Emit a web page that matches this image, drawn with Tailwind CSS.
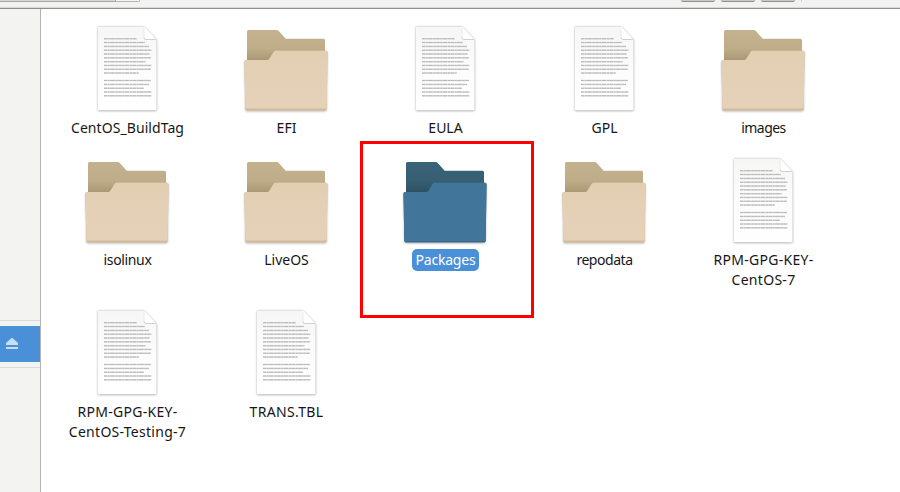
<!DOCTYPE html>
<html lang="en">
<head>
<meta charset="utf-8">
<title>Files</title>
<script src="https://cdn.jsdelivr.net/npm/@tailwindcss/browser@4"></script>
</head>
<body class="w-[900px] h-[492px] overflow-hidden bg-white flex flex-col font-['Noto_Sans','Open_Sans',sans-serif] text-[14px] leading-[20px] text-[#161616]">
<svg class="absolute w-0 h-0">
  <defs>
    <linearGradient id="tanBack" x1="0" y1="0" x2="0" y2="1"><stop offset="0" stop-color="#c4b18d"/><stop offset=".55" stop-color="#bfac88"/><stop offset="1" stop-color="#a3906e"/></linearGradient>
    <linearGradient id="blueBack" x1="0" y1="0" x2="0" y2="1"><stop offset="0" stop-color="#386378"/><stop offset=".55" stop-color="#365f73"/><stop offset="1" stop-color="#2a4c5d"/></linearGradient>
    <linearGradient id="tanFront" x1="0" y1="0" x2="0" y2="1"><stop offset="0" stop-color="#e2cfb3"/><stop offset="1" stop-color="#e4d1b8"/></linearGradient>
    <linearGradient id="pg" x1="0" y1="0" x2="0" y2="1"><stop offset="0" stop-color="#f6f6f5"/><stop offset=".5" stop-color="#fcfcfc"/><stop offset="1" stop-color="#fff"/></linearGradient>
    <filter id="sh" x="-10%" y="-10%" width="120%" height="120%"><feGaussianBlur stdDeviation="1.1"/></filter>
    <path id="frontShape" d="M8 40H29.5Q30.7 40 31.3 39L35.8 31.8Q36.5 30.7 37.8 30.7H88Q89.5 30.7 89.5 32.2L88.7 89Q88.7 90.4 87.3 90.4H8.7Q7.3 90.4 7.3 89L6.5 41.5Q6.5 40 8 40Z"/>
    <path id="backShape" d="M10.5 10H38.6Q39.6 10 40.5 10.8L47.7 18.7H85.5Q87 18.7 87 20.2V44H9V11.5Q9 10 10.5 10Z"/>
    <path id="textLines" d="M25 18.7H58M25 22.5H66M25 26.4H70M25 30.3H72.5M25 34H70.5M25 37.8H72M25 41.7H66.5M25 45.4H72.5M25 49.3H72M25 53.1H60M25 60.5H72M25 64.4H70M25 68.3H65M25 72H72.5M25 75.8H72.5" fill="none"/>
    <symbol id="folder" viewBox="0 0 96 96">
      <use href="#frontShape" y="1" fill="#000" opacity=".28" filter="url(#sh)"/>
      <use href="#backShape" fill="url(#tanBack)"/>
      <use href="#frontShape" fill="#d4bb97"/>
      <path d="M8 40H29.5Q30.7 40 31.3 39L35.8 31.8Q36.5 30.7 37.8 30.7H88Q89.5 30.7 89.5 32.2L88.7 88.5H7.3L6.5 41.5Q6.5 40 8 40Z" fill="url(#tanFront)"/>
    </symbol>
    <symbol id="folderSel" viewBox="0 0 96 96">
      <use href="#frontShape" y="1" fill="#000" opacity=".28" filter="url(#sh)"/>
      <use href="#backShape" fill="url(#blueBack)"/>
      <use href="#frontShape" fill="#3a6888"/>
      <path d="M8 40H29.5Q30.7 40 31.3 39L35.8 31.8Q36.5 30.7 37.8 30.7H88Q89.5 30.7 89.5 32.2L88.7 89H7.3L6.5 41.5Q6.5 40 8 40Z" fill="#42759a"/>
    </symbol>
    <symbol id="doc" viewBox="0 0 96 96">
      <path d="M19 7H65L77.5 20V90.8H19Z" fill="#000" opacity=".42" filter="url(#sh)"/>
      <path d="M19.8 6.8H65.2L77.5 19.8V89.2Q77.5 90.2 76.5 90.2H19.8Q18.8 90.2 18.8 89.2V7.8Q18.8 6.8 19.8 6.8Z" fill="url(#pg)"/>
      <path d="M65.2 6.8L77.5 19.8H67.2Q65.2 19.8 65.2 17.8Z" fill="#fff"/>
      <path d="M65 17.4Q65 19.5 67 19.5H77" fill="none" stroke="#c4c4c4" stroke-width=".8"/>
      <path d="M65 8.5V17.5" fill="none" stroke="#e6e6e6" stroke-width=".8"/>
      <use href="#textLines" stroke="#d6d6d6" stroke-width="1.5"/>
      <use href="#textLines" stroke="#b4b4b4" stroke-width=".9" stroke-dasharray="3 .9 1.6 .8 4.2 1 2.3 .7"/>
    </symbol>
  </defs>
</svg>

<header class="h-[9px] shrink-0 bg-[#f2f2f2] border-b border-[#8e9188] flex items-start justify-between shadow-[inset_0_-1px_0_#d9dad6]">
  <div class="flex">
    <div class="w-[116px] h-[2px] bg-[#d7d7d6] border-b border-r border-[#a9aaa6]"></div>
    <div class="w-[24px] h-[2px] bg-[#f5f5f5] border-b border-r border-[#b5b6b2] rounded-br-[2px]"></div>
  </div>
  <div class="flex gap-[6px] mr-[98px]">
    <div class="w-[34px] h-[2px] bg-[#c9cac5] border-b border-[#8f9289] rounded-b-[2px]"></div>
    <div class="w-[34px] h-[2px] bg-[#c9cac5] border-b border-[#8f9289] rounded-b-[2px]"></div>
    <div class="w-[34px] h-[2px] bg-[#c9cac5] border-b border-[#8f9289] rounded-b-[2px]"></div>
    <div class="w-px h-[2px] bg-[#d2d2d0]"></div>
  </div>
</header>

<div class="flex flex-1">
  <aside class="w-[41px] shrink-0 bg-[#f3f3f1] border-r border-[#b3b3af] pt-[311px]">
    <div class="h-px bg-[#d8d8d6]"></div>
    <div class="mt-[5px] h-[36px] bg-[#4a90d9] pt-[12px] pl-[6px]">
      <svg width="12" height="12" viewBox="0 0 12 12" fill="#c9def4"><path d="M5.5 0H6.5L12 5V7H0V5Z"/><path d="M0 9H12V11H0Z"/></svg>
    </div>
    <div class="mt-[5px] h-px bg-[#d8d8d6]"></div>
  </aside>

  <main class="pl-[7px] pt-[11px] grid grid-cols-[repeat(5,159px)] grid-rows-[132px_152px_152px] text-center">
    <div><svg class="ml-[31px] mb-[2px] block w-[96px] h-[96px]"><use href="#doc"/></svg><span class="tracking-[0.07px]">CentOS_BuildTag</span></div>
    <div><svg class="ml-[31px] mb-[2px] block w-[96px] h-[96px]"><use href="#folder"/></svg><span>EFI</span></div>
    <div><svg class="ml-[31px] mb-[2px] block w-[96px] h-[96px]"><use href="#doc"/></svg><span>EULA</span></div>
    <div><svg class="ml-[31px] mb-[2px] block w-[96px] h-[96px]"><use href="#doc"/></svg><span>GPL</span></div>
    <div><svg class="ml-[31px] mb-[2px] block w-[96px] h-[96px]"><use href="#folder"/></svg><span class="tracking-[-0.55px]">images</span></div>

    <div><svg class="ml-[31px] mb-[2px] block w-[96px] h-[96px]"><use href="#folder"/></svg><span class="tracking-[-0.35px]">isolinux</span></div>
    <div><svg class="ml-[31px] mb-[2px] block w-[96px] h-[96px]"><use href="#folder"/></svg><span>LiveOS</span></div>
    <div><svg class="ml-[31px] mb-[1px] block w-[96px] h-[96px]"><use href="#folderSel"/></svg><span class="block w-[67px] h-[22px] leading-[22px] ml-[46px] rounded-[5px] bg-[#4a90d9] text-white tracking-[-0.2px]">Packages</span></div>
    <div><svg class="ml-[31px] mb-[2px] block w-[96px] h-[96px]"><use href="#folder"/></svg><span class="tracking-[-0.45px]">repodata</span></div>
    <div><svg class="ml-[31px] mb-[2px] block w-[96px] h-[96px]"><use href="#doc"/></svg><span class="tracking-[0.3px]">RPM-GPG-KEY-<br>CentOS-7</span></div>

    <div><svg class="ml-[31px] mb-[2px] block w-[96px] h-[96px]"><use href="#doc"/></svg><span class="tracking-[0.28px]">RPM-GPG-KEY-<br>CentOS-Testing-7</span></div>
    <div><svg class="ml-[31px] mb-[2px] block w-[96px] h-[96px]"><use href="#doc"/></svg><span class="tracking-[0.35px]">TRANS.TBL</span></div>
  </main>
</div>

<div class="absolute left-[360px] top-[141px] w-[174px] h-[177px] border-3 border-[#fe0000]"></div>
</body>
</html>
